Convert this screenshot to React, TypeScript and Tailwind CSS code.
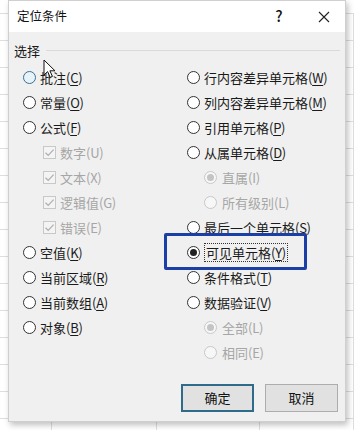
import React from 'react';

type Item = {
  label: string;
  key: string;
  kind: 'radio' | 'check' | 'subradio';
  checked?: boolean;
  disabled?: boolean;
  hover?: boolean;
  focus?: boolean;
};

const leftItems: Item[] = [
  { label: '批注', key: 'C', kind: 'radio', hover: true },
  { label: '常量', key: 'O', kind: 'radio' },
  { label: '公式', key: 'F', kind: 'radio' },
  { label: '数字', key: 'U', kind: 'check', checked: true, disabled: true },
  { label: '文本', key: 'X', kind: 'check', checked: true, disabled: true },
  { label: '逻辑值', key: 'G', kind: 'check', checked: true, disabled: true },
  { label: '错误', key: 'E', kind: 'check', checked: true, disabled: true },
  { label: '空值', key: 'K', kind: 'radio' },
  { label: '当前区域', key: 'R', kind: 'radio' },
  { label: '当前数组', key: 'A', kind: 'radio' },
  { label: '对象', key: 'B', kind: 'radio' },
];

const rightItems: Item[] = [
  { label: '行内容差异单元格', key: 'W', kind: 'radio' },
  { label: '列内容差异单元格', key: 'M', kind: 'radio' },
  { label: '引用单元格', key: 'P', kind: 'radio' },
  { label: '从属单元格', key: 'D', kind: 'radio' },
  { label: '直属', key: 'I', kind: 'subradio', checked: true, disabled: true },
  { label: '所有级别', key: 'L', kind: 'subradio', disabled: true },
  { label: '最后一个单元格', key: 'S', kind: 'radio' },
  { label: '可见单元格', key: 'Y', kind: 'radio', checked: true, focus: true },
  { label: '条件格式', key: 'T', kind: 'radio' },
  { label: '数据验证', key: 'V', kind: 'radio' },
  { label: '全部', key: 'L', kind: 'subradio', checked: true, disabled: true },
  { label: '相同', key: 'E', kind: 'subradio', disabled: true },
];

const Radio = ({ checked, disabled, hover }: { checked?: boolean; disabled?: boolean; hover?: boolean }) => (
  <span
    className={`flex h-[13px] w-[13px] shrink-0 items-center justify-center rounded-full border ${
      disabled ? 'border-[#c8c8c8] bg-[#f7f7f7]' : hover ? 'border-[#3a6f8f] bg-[#e6f3f8]' : 'border-[#333] bg-white'
    }`}
  >
    {checked && <span className={`h-[7px] w-[7px] rounded-full ${disabled ? 'bg-[#c4c4c4]' : 'bg-[#222]'}`} />}
  </span>
);

const Check = () => (
  <span className="flex h-[13px] w-[13px] shrink-0 items-center justify-center border border-[#c8c8c8] bg-[#f4f4f4]">
    <svg width="11" height="11" viewBox="0 0 11 11" fill="none">
      <path d="M1.5 5.8 L4.2 8.4 L9.6 2.6" stroke="#b0b0b0" strokeWidth="1.3" />
    </svg>
  </span>
);

const Row = ({ item }: { item: Item }) => {
  const text = (
    <span className={item.disabled ? 'text-[#a6a6a6]' : 'text-[#1a1a1a]'}>
      {item.label}
      <span className="tracking-[-0.3px]">
        ({item.disabled ? item.key : <u className="underline-offset-2">{item.key}</u>})
      </span>
    </span>
  );
  return (
    <div
      className={`flex h-[25px] items-center ${
        item.kind === 'check' ? 'pl-[20px] gap-[4px]' : item.kind === 'subradio' ? 'pl-[17px] gap-[5px]' : 'gap-[4px]'
      }`}
    >
      {item.kind === 'check' ? <Check /> : <Radio checked={item.checked} disabled={item.disabled} hover={item.hover} />}
      {item.focus ? <span className="border border-dotted border-[#333] px-px leading-[17px]">{text}</span> : text}
    </div>
  );
};

export default function App() {
  const rows = Array.from({ length: 17 });
  const cols = [52, 105, 103, 94];
  return (
    <div
      className="relative h-[430px] w-[354px] overflow-hidden bg-white text-[13px]"
      style={{ fontFamily: '"Noto Sans CJK SC", "Noto Sans", sans-serif' }}
    >
      {/* sheet behind the dialog */}
      <div className="flex flex-col pt-[13px]">
        {rows.map((_, r) => (
          <div key={r} className="flex h-[27px] border-t border-[#dedede]">
            {cols.map((w, c) => (
              <div key={c} className="h-full border-r border-[#dedede]" style={{ width: w }} />
            ))}
          </div>
        ))}
      </div>

      {/* dialog */}
      <div className="absolute left-[8px] top-0 flex h-[422px] w-[338px] flex-col border border-[#cfcfcf] bg-[#f0f0f0] shadow-[2px_3px_6px_rgba(0,0,0,0.25)]">
        <div className="flex h-[31px] items-center bg-white pl-[8px] text-[12.5px] text-[#111]">
          <span className="flex-1">定位条件</span>
          <span className="w-[16px] text-center text-[15px] font-medium">?</span>
          <span className="ml-[31px] mr-[15px] flex w-[12px] justify-center">
            <svg width="12" height="12" viewBox="0 0 12 12">
              <path d="M1 1 L11 11 M11 1 L1 11" stroke="#222" strokeWidth="1.1" />
            </svg>
          </span>
        </div>

        <div className="flex flex-1 flex-col px-[5px] pt-[10px]">
          <div className="flex h-[18px] items-center gap-[6px] text-[#1a1a1a]">
            <span>选择</span>
            <span className="mt-[-2px] h-px flex-1 bg-[#dadada]" />
          </div>
          <div className="mt-[5px] grid grid-cols-[164px_1fr] pl-[9px]">
            <div className="flex flex-col">
              {leftItems.map((it, i) => (
                <Row key={i} item={it} />
              ))}
            </div>
            <div className="flex flex-col">
              {rightItems.map((it, i) => (
                <Row key={i} item={it} />
              ))}
            </div>
          </div>

          <div className="mt-[19px] flex justify-end gap-[11px] pr-[2px]">
            <button className="h-[28px] w-[73px] border-2 border-[#2f6b8a] bg-[#e1e1e1] text-[13px] text-[#111]">
              确定
            </button>
            <button className="h-[28px] w-[73px] border border-[#adadad] bg-[#e1e1e1] text-[13px] text-[#111]">
              取消
            </button>
          </div>
        </div>
      </div>

      {/* annotation box */}
      <div className="pointer-events-none absolute left-[164px] top-[233px] h-[37px] w-[143px] rounded-[2px] border-[3px] border-[#1c3fa6]" />

      {/* mouse cursor */}
      <svg className="absolute left-[43px] top-[59px]" width="14" height="20" viewBox="0 0 14 20">
        <path d="M1 1 L1 16 L4.6 12.6 L7.2 18.4 L9.4 17.4 L6.9 11.8 L12 11.8 Z" fill="white" stroke="#111" strokeWidth="1" strokeLinejoin="round" />
      </svg>
    </div>
  );
}
